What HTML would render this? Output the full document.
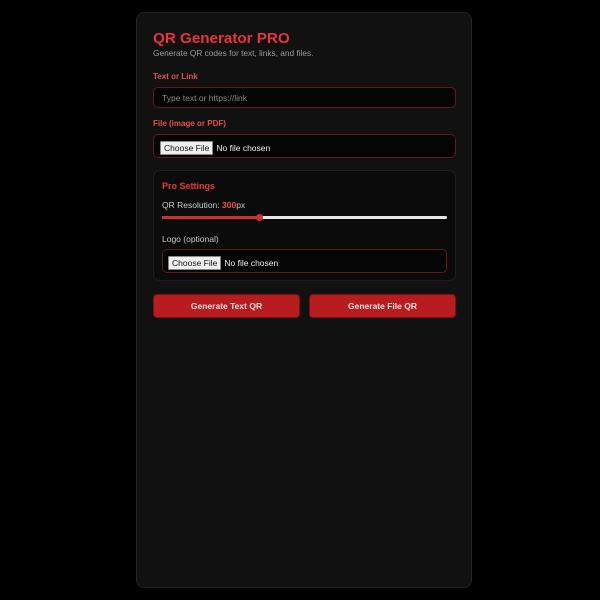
<!DOCTYPE html>
<html><head><style>
*{box-sizing:border-box;margin:0;padding:0}
body{width:600px;height:600px;background:#000;font-family:"Liberation Sans",sans-serif;position:relative;overflow:hidden}
.card{position:absolute;left:136px;top:12px;width:336px;height:576px;background:#111;border:1px solid #262626;border-radius:8px}
.abs{position:absolute}
.t{left:16px;top:17px;font-size:15.2px;font-weight:bold;color:#e8343a}
.sub{left:16px;top:35px;font-size:8.3px;color:#9a9a9a}
.lbl{font-size:8px;font-weight:bold;color:#e05050}
.inp{background:#050505;border:1px solid #5e1a1c;border-radius:5px}
.ph{font-size:8.5px;color:#8a8a8a}
.fb{background:#efefef;border:1px solid #888;color:#111;font-size:8.5px;padding:1px 3px;border-radius:1px;display:inline-block}
.fn{font-size:8.5px;color:#eee;margin-left:3px}
.panel{left:16px;top:157px;width:303px;height:111px;background:#0b0b0b;border:1px solid #1e1e1e;border-radius:7px}
.btn{top:281px;height:24px;width:147px;background:#b71c1f;border:1px solid #7a1214;border-radius:4px;color:#f0e0e0;font-size:8.5px;font-weight:bold;text-align:center;line-height:22px}
</style></head><body>
<div class="card">
<div class="abs t">QR Generator PRO</div>
<div class="abs sub">Generate QR codes for text, links, and files.</div>
<div class="abs lbl" style="left:16px;top:59px">Text or Link</div>
<div class="abs inp" style="left:16px;top:74px;width:303px;height:21px"><span class="abs ph" style="left:8px;top:5px">Type text or https://link</span></div>
<div class="abs lbl" style="left:16px;top:106px">File (image or PDF)</div>
<div class="abs inp" style="left:16px;top:121px;width:303px;height:24px;padding:3px 6px"><span class="fb">Choose File</span><span class="fn">No file chosen</span></div>
<div class="abs panel">
<div class="abs" style="left:8px;top:10px;font-size:9px;font-weight:bold;color:#e53a3a">Pro Settings</div>
<div class="abs" style="left:8px;top:29px;font-size:8.5px;color:#ccc">QR Resolution: <span style="color:#f05050;font-weight:bold">300</span>px</div>
<div class="abs" style="left:8px;top:45px;width:285px;height:3px;background:#e8e8e8;border-radius:2px"></div>
<div class="abs" style="left:8px;top:45px;width:97px;height:3px;background:#d32f2f;border-radius:2px"></div>
<div class="abs" style="left:102px;top:43px;width:7px;height:7px;background:#d32f2f;border-radius:50%"></div>
<div class="abs" style="left:8px;top:63px;font-size:8.5px;color:#ccc">Logo (optional)</div>
<div class="abs inp" style="left:8px;top:78px;width:285px;height:24px;padding:3px 5px"><span class="fb">Choose File</span><span class="fn">No file chosen</span></div>
</div>
<div class="abs btn" style="left:16px">Generate Text QR</div>
<div class="abs btn" style="left:172px">Generate File QR</div>
</div>
</body></html>
